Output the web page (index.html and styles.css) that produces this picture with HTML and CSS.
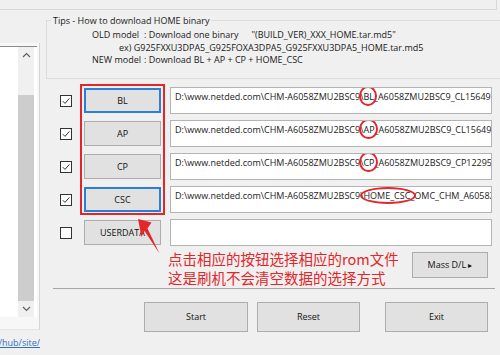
FILE: index.html
```html
<!DOCTYPE html>
<html>
<head>
<meta charset="utf-8">
<link rel="stylesheet" href="styles.css">
</head>
<body>
<div class="app">
  <div class="topstrip"></div>
  <div class="main">
    <aside class="side">
      <div class="sideframe">
        <div class="listbox">
          <div class="listarea"></div>
          <div class="vscroll">
            <span class="sarrow up"><svg width="9" height="6" viewBox="0 0 9 6"><path d="M1 5 L4.5 1.5 L8 5" fill="none" stroke="#606060" stroke-width="1.2"/></svg></span>
            <span class="thumb"></span>
            <span class="sarrow down"><svg width="9" height="6" viewBox="0 0 9 6"><path d="M1 1 L4.5 4.5 L8 1" fill="none" stroke="#606060" stroke-width="1.2"/></svg></span>
          </div>
        </div>
      </div>
      <div class="link"><a class="url">http://www.github.com/hub/site/</a></div>
    </aside>
    <section class="content">
      <fieldset class="tips">
        <legend>Tips - How to download HOME binary</legend>
        <div class="tip-line"><span class="tip-label">OLD model</span>: Download one binary<span class="quote">"(BUILD_VER)_XXX_HOME.tar.md5"</span></div>
        <div class="tip-line ex">ex) G925FXXU3DPA5_G925FOXA3DPA5_G925FXXU3DPA5_HOME.tar.md5</div>
        <div class="tip-line"><span class="tip-label">NEW model</span>: Download BL + AP + CP + HOME_CSC</div>
      </fieldset>

      <div class="files">
        <span class="check"><svg width="10" height="10" viewBox="0 0 10 10"><path d="M1.8 5.2 L4 7.4 L8.4 2.4" fill="none" stroke="#333" stroke-width="1"/></svg></span>
        <button class="btn slot focus">BL</button>
        <div class="field">D:\www.netded.com\CHM-A6058ZMU2BSC9\<span class="mark">BL</span>_A6058ZMU2BSC9_CL15649</div>

        <span class="check"><svg width="10" height="10" viewBox="0 0 10 10"><path d="M1.8 5.2 L4 7.4 L8.4 2.4" fill="none" stroke="#333" stroke-width="1"/></svg></span>
        <button class="btn slot">AP</button>
        <div class="field">D:\www.netded.com\CHM-A6058ZMU2BSC9\<span class="mark">AP</span>_A6058ZMU2BSC9_CL15649</div>

        <span class="check"><svg width="10" height="10" viewBox="0 0 10 10"><path d="M1.8 5.2 L4 7.4 L8.4 2.4" fill="none" stroke="#333" stroke-width="1"/></svg></span>
        <button class="btn slot">CP</button>
        <div class="field">D:\www.netded.com\CHM-A6058ZMU2BSC9\<span class="mark">CP</span>_A6058ZMU2BSC9_CP12295</div>

        <span class="check"><svg width="10" height="10" viewBox="0 0 10 10"><path d="M1.8 5.2 L4 7.4 L8.4 2.4" fill="none" stroke="#333" stroke-width="1"/></svg></span>
        <button class="btn slot focus">CSC</button>
        <div class="field">D:\www.netded.com\CHM-A6058ZMU2BSC9\<span class="mark wide">HOME_CSC</span>_OMC_CHM_A6058ZMU2BSC9</div>

        <span class="check"></span>
        <button class="btn slot">USERDATA</button>
        <div class="field"></div>

        <div class="redbox"></div>
      </div>

      <div class="note-row">
        <p class="note">点击相应的按钮选择相应的rom文件<br>这是刷机不会清空数据的选择方式</p>
        <button class="btn mass">Mass D/L <span class="tri">&#9656;</span></button>
      </div>
      <hr class="sep">
      <div class="actions">
        <button class="btn act start">Start</button>
        <button class="btn act reset">Reset</button>
        <button class="btn act exit">Exit</button>
      </div>
    </section>
  </div>
  <svg class="pointer" width="35" height="45" viewBox="130 212 35 45">
    <path d="M138 219 L151.5 222.5 L147.5 228.5 L159.5 253.5 L144.5 231 L141.5 237 Z" fill="#e3262a"/>
  </svg>
</div>
</body>
</html>
```

FILE: styles.css
```css
* { box-sizing: border-box; }
html, body { margin: 0; padding: 0; }
body {
  width: 500px;
  height: 355px;
  overflow: hidden;
  background: #f0f0f0;
  font-family: "Open Sans", "Noto Sans", sans-serif;
  font-size: 9px;
  color: #1a1a1a;
}
.app { position: relative; width: 500px; height: 355px; overflow: hidden; }
.topstrip {
  height: 10px;
  margin-right: 3px;
  border-bottom: 1px solid #d8d8d8;
  border-right: 1px solid #d8d8d8;
}
.main { display: flex; align-items: flex-start; }

/* left panel */
.side { width: 40px; flex: none; }
.sideframe {
  margin-top: 33px;
  height: 287px;
  background: #f7f7f7;
  border-right: 1px solid #d6d6d6;
  border-bottom: 1px solid #e4e4e4;
  padding-top: 3px;
}
.listbox {
  display: flex;
  width: 37px;
  height: 271px;
  background: #fff;
  border-top: 1px solid #8a8a8a;
  padding-right: 3px;
}
.listarea { flex: 1; }
.vscroll {
  width: 16px;
  display: flex;
  flex-direction: column;
  background: #f0f0f0;
}
.sarrow { display: flex; align-items: center; justify-content: center; }
.sarrow.up { height: 17px; }
.sarrow.down { height: 16px; margin-top: auto; }
.thumb { height: 207px; margin-top: 31px; background: #cdcdcd; }
.link {
  margin-top: 6px;
  width: 40px;
  overflow: hidden;
  display: flex;
  justify-content: flex-end;
  line-height: 13px;
}
.url { color: #2f6fc0; text-decoration: underline; white-space: nowrap; flex: none; }

/* right content */
.content { margin-left: 6px; width: 454px; flex: none; }
.tips {
  margin: 4px -12px 0 0;
  padding: 2px 0 11px 0;
  border: 1px solid #dcdcdc;
}
.tips legend { margin-left: 4px; padding: 0 2px; line-height: 13px; }
.tip-line { line-height: 12.5px; padding-left: 45px; white-space: nowrap; }
.tip-line.ex { padding-left: 72px; }
.tip-label { display: inline-block; width: 52px; }
.quote { margin-left: 13px; }

.files {
  position: relative;
  margin: 9px 0 0 14px;
  display: grid;
  grid-template-columns: 24px 86px 322px;
  grid-auto-rows: 26px;
  row-gap: 7px;
  align-items: center;
}
.check {
  width: 12px;
  height: 12px;
  border: 1px solid #333;
  background: #fff;
  display: flex;
  align-items: center;
  justify-content: center;
}
.btn {
  font-family: "Open Sans", "Noto Sans", sans-serif;
  font-size: 9px;
  color: #111;
  background: #e1e1e1;
  border: 1px solid #adadad;
  padding: 0;
  margin: 0;
}
.slot { width: 77px; height: 25px; }
.slot.focus { border: 2px solid #2a7fd6; }
.field {
  height: 27px;
  background: #fff;
  border: 1px solid #b4b4b4;
  padding: 3px 0 0 4px;
  line-height: 12px;
  white-space: nowrap;
  overflow: hidden;
}
.mark { position: relative; }
.mark::after {
  content: "";
  position: absolute;
  left: -4px;
  right: -3px;
  top: -4px;
  bottom: -3px;
  border: 2px solid #e3262a;
  border-radius: 50%;
}
.mark.wide::after { left: -3px; right: -6px; top: -2px; bottom: -2px; }
.redbox {
  position: absolute;
  left: 20px;
  top: -4px;
  width: 85px;
  height: 131px;
  border: 2px solid #e3262a;
}

.note-row { display: flex; align-items: flex-start; margin-top: 3px; height: 38px; }
.note {
  margin: 0 0 0 122px;
  font-family: "Noto Sans CJK SC", sans-serif;
  font-size: 14.5px;
  line-height: 19px;
  color: #e3262a;
  white-space: nowrap;
}
.mass { margin: 3px 12px 0 auto; width: 76px; height: 26px; }
.tri { font-size: 8px; }
.sep { margin: 1px 5px 0 7px; border: 0; border-top: 1px solid #a6a6a6; height: 0; }
.actions { display: flex; margin-top: 13px; padding-left: 98px; }
.act { height: 30px; width: 103px; }
.start { width: 104px; }
.reset { margin-left: 9px; }
.exit { margin-left: 25px; }

.pointer { position: absolute; left: 130px; top: 212px; }
```
